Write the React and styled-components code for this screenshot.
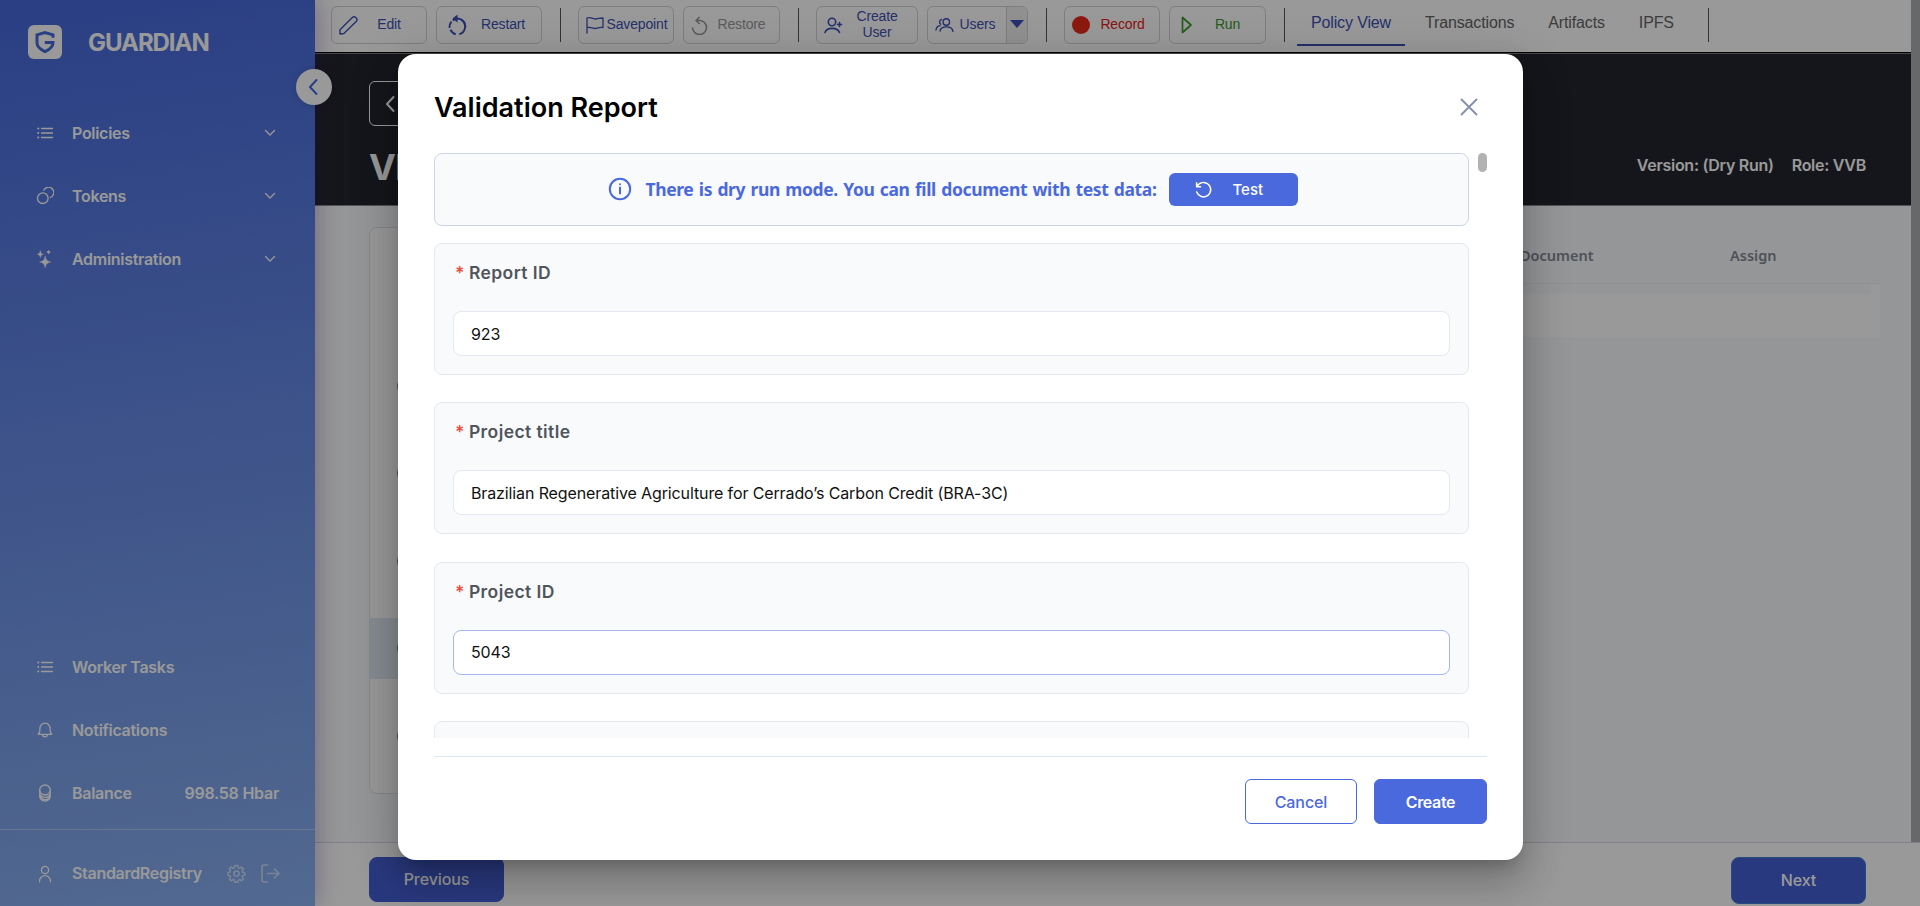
import React from "react";
import styled, { createGlobalStyle } from "styled-components";

const Global = createGlobalStyle`
  *, *::before, *::after { box-sizing: border-box; }
  html, body { margin: 0; padding: 0; height: 906px; overflow: hidden; }
  body { font-family: Inter, "Liberation Sans", sans-serif; background: #fff; }
  button, input { font-family: inherit; margin: 0; }
  svg { display: block; flex: none; }
`;

const Page = styled.div`
  position: relative;
  display: grid;
  grid-template-columns: 315px 1fr;
  width: 1920px;
  height: 906px;
  overflow: hidden;
`;

/* ---------- sidebar ---------- */

const Sidebar = styled.aside`
  position: relative;
  z-index: 2;
  display: flex;
  flex-direction: column;
  color: #fff;
  background: linear-gradient(172deg, #4769dc 0%, #89aff0 100%);
  box-shadow: 0 0 24px rgba(67, 20, 127, 0.35);
`;

const Brand = styled.div`
  display: flex;
  align-items: center;
  gap: 26px;
  height: 34px;
  margin: 25px 0 42px 28px;
  font-size: 24px;
  font-weight: 700;
  letter-spacing: -1.05px;
`;

const Menu = styled.nav`
  display: flex;
  flex-direction: column;
`;

const MenuItem = styled.div`
  display: flex;
  align-items: center;
  height: 63px;
  padding: 0 36px 0 36px;
  font-size: 16px;
  font-weight: 600;
  letter-spacing: -0.3px;
`;

const MenuLabel = styled.span`
  flex: 1;
  margin-left: 18px;
`;

const MenuValue = styled.span`
  letter-spacing: -0.25px;
`;

const ChevronWrap = styled.span`
  margin-right: 3px;
`;

const Spacer = styled.div`
  flex: 1;
`;

const UserBar = styled.div`
  display: flex;
  align-items: center;
  height: 77px;
  margin-top: 5px;
  padding: 10px 35px 0 36px;
  border-top: 1px solid rgba(255, 255, 255, 0.35);
  font-size: 16px;
  font-weight: 600;
  letter-spacing: -0.3px;
`;

const UserActions = styled.div`
  display: flex;
  gap: 14px;
  opacity: 0.6;
`;

const Collapse = styled.button`
  position: absolute;
  left: 296px;
  top: 69px;
  display: flex;
  align-items: center;
  justify-content: center;
  width: 36px;
  height: 36px;
  padding: 0 2px 0 0;
  border: 0;
  border-radius: 50%;
  background: #fff;
  box-shadow: 0 0 8px rgba(0, 0, 0, 0.15);
`;

/* ---------- main area ---------- */

const Main = styled.main`
  display: grid;
  grid-template-rows: 842px 64px;
  min-width: 0;
`;

const Viewport = styled.div`
  display: grid;
  grid-template-rows: 54px 152px 636px;
  min-width: 0;
  border-right: 9px solid #abadaf;
  background: #f9fafc;
`;

const TopRow = styled.div`
  display: flex;
  align-items: flex-start;
  background: #fff;
  border-bottom: 1px solid #777;
  box-shadow: inset 0 -1px 0 #000;
  padding: 6px 0 0 16px;
  font-family: "Liberation Sans", Arial, sans-serif;
`;

const ToolButton = styled.button`
  display: flex;
  align-items: center;
  width: ${(p) => p.$w}px;
  height: 38px;
  margin-right: ${(p) => p.$gap ?? 9}px;
  padding: 0 0 0 ${(p) => p.$pad ?? 7}px;
  border: 1px solid #d3d3d3;
  border-radius: 6px;
  background: transparent;
  color: ${(p) => p.$color ?? "#3f51b5"};
  font-size: 14px;
  line-height: 16px;
  letter-spacing: -0.15px;
  overflow: hidden;
`;

const ToolText = styled.span`
  flex: 1;
  padding-right: ${(p) => p.$pr ?? 4}px;
  padding-bottom: 2px;
  text-align: center;
`;

const Caret = styled.span`
  display: flex;
  align-items: center;
  justify-content: center;
  width: 21px;
  height: 36px;
  padding-bottom: 2px;
  border-left: 1px solid #d3d3d3;
  background: #f0f0f0;
`;

const Divider = styled.span`
  width: 1px;
  height: 34px;
  margin: 2px 17px 0 ${(p) => p.$ml ?? 9}px;
  background: #555;
`;

const Tab = styled.span`
  height: 40px;
  margin-right: 6px;
  padding: 8px 14px 0;
  border-bottom: 2px solid ${(p) => (p.$active ? "#3f51b5" : "transparent")};
  color: ${(p) => (p.$active ? "#3f51b5" : "#666")};
  font-size: 16px;
  line-height: 18px;
  letter-spacing: -0.14px;
`;

const Tabs = styled.div`
  display: flex;
  margin-left: -5px;
`;

const Hero = styled.header`
  display: flex;
  flex-direction: column;
  padding: 27px 45px 0 54px;
  color: #fff;
  background: #23252d;
  border-bottom: 1px solid #8b8d92;
`;

const BackButton = styled.button`
  display: flex;
  align-items: center;
  width: 110px;
  height: 45px;
  padding: 0 0 0 14px;
  border: 1px solid #fff;
  border-radius: 6px;
  background: transparent;
`;

const HeroRow = styled.div`
  display: flex;
  align-items: center;
  justify-content: space-between;
  height: 44px;
  margin-top: 19px;
`;

const HeroTitle = styled.h1`
  margin: 0;
  font-size: 36px;
  font-weight: 700;
  letter-spacing: -0.8px;
`;

const HeroMeta = styled.div`
  display: flex;
  gap: 18px;
  padding-bottom: 4px;
  font-size: 16px;
  font-weight: 600;
  letter-spacing: -0.28px;
`;

const Body = styled.section`
  display: flex;
  padding-left: 54px;
`;

const Steps = styled.div`
  display: flex;
  flex-direction: column;
  width: 300px;
  height: 567px;
  margin-top: 21px;
  border: 1px solid #e1e3e9;
  border-radius: 8px;
  background: #fff;
`;

const StepsHead = styled.div`
  height: 133px;
`;

const Step = styled.div`
  display: flex;
  align-items: center;
  height: 63px;
  margin-bottom: 27px;
  padding-left: 27px;
  background: ${(p) => (p.$active ? "#dfe9f3" : "transparent")};
`;

const StepDot = styled.span`
  width: 20px;
  height: 20px;
  border-radius: 50%;
  background: #6e7078;
`;

const Grid = styled.div`
  flex: 1;
  display: flex;
  flex-direction: column;
  padding: 24px 31px 0 0;
`;

const GridHead = styled.div`
  display: flex;
  justify-content: flex-end;
  height: 53px;
  padding: 15px 103px 0 0;
  color: #848995;
  font-family: "Noto Sans", sans-serif;
  font-size: 14.5px;
  font-weight: 600;
  line-height: 20px;
`;

const HeadCell = styled.span`
  width: ${(p) => p.$w}px;
`;

const GridRow = styled.div`
  height: 54px;
  background: #fff;
  border-top: 1px solid #eef0f4;
`;

const GridRowShade = styled.div`
  height: 10px;
  margin-right: 9px;
  background: #f9fafc;
`;

const BottomBar = styled.footer`
  display: flex;
  justify-content: space-between;
  padding: 14px 54px 0;
  background: #fff;
  border-top: 1px solid #d5d8e2;
`;

const NavButton = styled.button`
  width: 135px;
  height: ${(p) => p.$h}px;
  padding: 0 0 2px;
  border: 1px solid ${(p) => (p.$edge ? "#3f7fd0" : "#4560d6")};
  border-radius: 8px;
  background: #455fd4;
  color: #fff;
  font-size: 16px;
  font-weight: 500;
  letter-spacing: -0.1px;
`;

/* ---------- dialog ---------- */

const Overlay = styled.div`
  position: absolute;
  inset: 0;
  z-index: 10;
  display: flex;
  justify-content: center;
  align-items: flex-start;
  padding: 54px 0 0 1px;
  background: rgba(0, 0, 0, 0.4);
`;

const Dialog = styled.section`
  display: flex;
  flex-direction: column;
  width: 1125px;
  height: 806px;
  padding: 0 36px;
  border-radius: 18px;
  background: #fff;
  box-shadow: 0 11px 15px -7px rgba(0, 0, 0, 0.2), 0 24px 38px 3px rgba(0, 0, 0, 0.14),
    0 9px 46px 8px rgba(0, 0, 0, 0.12);
`;

const DialogHead = styled.div`
  display: flex;
  align-items: center;
  justify-content: space-between;
  height: 99px;
  padding: 7px 9px 0 0;
`;

const DialogTitle = styled.h2`
  margin: 0;
  color: #000;
  font-size: 27px;
  font-weight: 600;
  letter-spacing: 0;
`;

const ScrollArea = styled.div`
  display: flex;
  gap: 9px;
  height: 585px;
  overflow: hidden;
`;

const Form = styled.div`
  width: 1035px;
  flex: none;
`;

const Thumb = styled.div`
  width: 9px;
  height: 19px;
  border-radius: 5px;
  background: #b2b2b2;
`;

const Notice = styled.div`
  display: flex;
  align-items: center;
  justify-content: center;
  height: 73px;
  margin-bottom: 17.2px;
  padding: 0 0 2px 2px;
  border: 1px solid #cbd5e4;
  border-radius: 8px;
  background: #f9fafc;
  color: #4a69dc;
  font-family: "Noto Sans", "Open Sans", sans-serif;
  font-size: 17.5px;
  font-weight: 700;
`;

const NoticeText = styled.span`
  width: 506px;
  margin: 0 17px 0 14px;
  white-space: nowrap;
  letter-spacing: -0.38px;
  word-spacing: 1.2px;
`;

const TestButton = styled.button`
  display: flex;
  align-items: center;
  gap: 20px;
  width: 129px;
  height: 33px;
  margin-top: 2px;
  padding: 0 0 0 26px;
  border: 0;
  border-radius: 6px;
  background: #4a69dc;
  color: #fff;
  font-family: Inter, sans-serif;
  font-size: 15px;
  font-weight: 500;
`;

const Field = styled.div`
  height: 132px;
  margin-bottom: 27.2px;
  padding: 17px 18px 0;
  border: 1px solid #e4e9f0;
  border-radius: 8px;
  background: #f9fafc;
`;

const Label = styled.label`
  display: flex;
  gap: 4px;
  height: 24px;
  margin: 0 0 26px 2px;
  color: #50555d;
  font-size: 17.5px;
  font-weight: 600;
  line-height: 24px;
  letter-spacing: 0.42px;
  white-space: nowrap;
`;

const Required = styled.span`
  color: #e8503f;
`;

const Input = styled.input`
  display: block;
  width: 997px;
  height: 45px;
  padding: 0 17px;
  border: 1px solid ${(p) => (p.$focus ? "#a6b6ee" : "#e4e8f0")};
  border-radius: 8px;
  outline: 0;
  background: #fff;
  color: #111;
  font-size: 16px;
  letter-spacing: -0.12px;
`;

const DialogFoot = styled.div`
  display: flex;
  justify-content: flex-end;
  gap: 17px;
  margin-top: 18px;
  padding-top: 22px;
  border-top: 1px solid #e1e7ef;
`;

const Action = styled.button`
  width: ${(p) => p.$w}px;
  height: 45px;
  border: 1px solid #4a69dc;
  border-radius: 6px;
  background: ${(p) => (p.$primary ? "#4a69dc" : "#fff")};
  color: ${(p) => (p.$primary ? "#fff" : "#4a69dc")};
  font-size: 16px;
  font-weight: ${(p) => (p.$primary ? 600 : 500)};
  letter-spacing: ${(p) => (p.$primary ? "-0.35px" : "-0.1px")};
`;

/* ---------- icons ---------- */

const Svg = ({ w = 18, h = w, box, sw = 1.3, children, ...rest }) => (
  <svg width={w} height={h} viewBox={box ?? `0 0 ${w} ${h}`} fill="none" stroke="currentColor"
    strokeWidth={sw} strokeLinecap="round" strokeLinejoin="round" {...rest}>{children}</svg>
);

const LogoIcon = () => (
  <Svg w={34} strokeLinecap="butt" strokeLinejoin="miter" sw={3}>
    <rect width="34" height="34" rx="6" fill="#fff" stroke="none" />
    <path d="M25 12.800V9.800L17 7.500 9 9.800v8c0 4.500 3.600 6.800 8 8.900 4.400-2.100 8-4.400 8-9.200H16.800" stroke="#4769dc" />
  </Svg>
);
const ListIcon = () => (
  <Svg w={18} sw={1.3}>
    <path d="M5.500 4.500h11M5.500 9h11M5.500 13.500h11" />
    <path d="M2.200 4.500h.1M2.200 9h.1M2.200 13.500h.1" strokeWidth="2" />
  </Svg>
);
const TokensIcon = () => (
  <Svg w={18}>
    <circle cx="6.800" cy="11.200" r="5.300" />
    <path d="M7.700 3.200a5.300 5.300 0 1 1 6.500 7.300" />
  </Svg>
);
const SparkIcon = () => (
  <Svg w={18} stroke="none" fill="currentColor">
    <path d="M9.200 6.200c.8 4 1.700 4.900 5.500 5.800-3.800.9-4.700 1.800-5.500 5.800-.8-4-1.700-4.900-5.500-5.800 3.800-.9 4.700-1.800 5.500-5.800zM4.300 1c.4 2.100 1 2.700 3 3.200-2 .5-2.600 1.100-3 3.200-.4-2.100-1-2.700-3-3.200 2-.5 2.600-1.100 3-3.200zM12.600 0c.3 1.400.7 1.800 2.100 2.100-1.400.3-1.800.7-2.100 2.100-.3-1.400-.7-1.800-2.100-2.100 1.400-.3 1.800-.7 2.100-2.100z" stroke="currentColor" strokeWidth=".5" />
  </Svg>
);
const BellIcon = () => (
  <Svg w={18}>
    <path d="M2.200 13.300h13.600c-1.300-1.200-1.700-2.300-1.700-4.200V7.300a5.100 5.100 0 0 0-10.200 0v1.800c0 1.900-.4 3-1.700 4.200zM6.600 13.500a2.400 2.400 0 0 0 4.800 0" />
  </Svg>
);
const CoinsIcon = () => (
  <Svg w={18}>
    <ellipse cx="9" cy="6" rx="5.300" ry="5" />
    <path d="M3.700 6.500v5.800c0 2.900 2.300 4.800 5.300 4.800s5.300-1.900 5.300-4.800V6.500M3.700 9.300c.5 2.500 2.600 4 5.300 4s4.800-1.500 5.300-4M4 12.500c.8 2.100 2.600 3.200 5 3.200s4.200-1.100 5-3.200" />
  </Svg>
);
const UserIcon = () => (
  <Svg w={18} h={19}>
    <circle cx="9" cy="6" r="3.600" />
    <path d="M3.500 17.800v-.6a5.500 5.500 0 0 1 11 0v.6" />
  </Svg>
);
const GearIcon = () => (
  <Svg w={19} box="0 0 24 24" sw={1.900}>
    <circle cx="12" cy="12" r="3.300" />
    <path d="m10 1.800-.7 2.900-1.700.7-2.500-1.600-2.200 2.200 1.600 2.600-.7 1.700-2.500.6v3.200l2.500.6.700 1.700-1.600 2.600 2.200 2.200 2.500-1.600 1.700.7.700 2.900h3.600l.7-2.900 1.700-.7 2.500 1.600 2.200-2.200-1.600-2.600.7-1.700 2.500-.6v-3.200l-2.500-.6-.7-1.700 1.600-2.600-2.200-2.200-2.500 1.600-1.700-.7-.7-2.900z" />
  </Svg>
);
const ExitIcon = () => (
  <Svg w={20} h={19} sw={1.600}>
    <path d="M7.500 1H4a2 2 0 0 0-2 2v13a2 2 0 0 0 2 2h3.500M7.500 9.500H19M14.500 5l4.500 4.500-4.500 4.500" />
  </Svg>
);
const ChevronDown = () => <Svg w={12} h={8}><path d="m1.500 1.500 4.500 4.500 4.500-4.500" /></Svg>;
const ChevronLeft = ({ color = "#4169e2" }) => (
  <Svg w={12} h={18} sw={2} stroke={color}><path d="M9.500 2 3 9l6.500 7" /></Svg>
);
const PencilIcon = () => (
  <Svg w={19} sw={1.400}>
    <path d="M1 18v-4.200L13.300 1.600a2.500 2.500 0 0 1 3.500 0l.4.4a2.500 2.500 0 0 1 0 3.500L4.900 17.500z" />
  </Svg>
);
const RestartIcon = () => (
  <Svg w={19} h={22} sw={2} strokeLinecap="butt">
    <path d="M11.300 20.300a8 8 0 0 0 2-14.500M7.700 20.300a8 8 0 0 1-5.200-4.600M1.500 13.800a8 8 0 0 1 2-6.100M4.700 6.500a8 8 0 0 1 5.300-2" />
    <path d="M9.500 0.500v8L4.500 4.500z" fill="currentColor" stroke="none" />
    <path d="M9 4.500a8.200 8.200 0 0 1 8.500 8.500" />
  </Svg>
);
const FlagIcon = () => (
  <Svg w={18} h={18} sw={1.300}>
    <path d="M1 17V2M1 2c4-1.700 6 1.300 9 1 2.500-.2 4.500-1.200 7-1v9.500c-4-.8-5 1-8 1-2.500 0-4.500-2-8-.8" />
  </Svg>
);
const RestoreIcon = () => (
  <Svg w={17} h={19} sw={1.600} strokeLinecap="butt">
    <path d="M1.500 11.500a7 7 0 1 0 7-7H5.500M8.700 1 5 4.500 8.700 8" />
  </Svg>
);
const AddUserIcon = () => (
  <Svg w={19} h={17} sw={1.600}>
    <circle cx="8" cy="5" r="3.700" />
    <path d="M1 15.500c1.500-5.500 12.500-5.500 14.500 0M15.500 5.500v4M13.500 7.500h4" />
  </Svg>
);
const UsersIcon = () => (
  <Svg w={19} h={16} sw={1.400}>
    <circle cx="11.300" cy="5" r="3.200" />
    <path d="M5 14c1-5.500 12-5.500 13 .3M6.500 2.500a2.700 2.700 0 0 0-.8 4.800M1 13c.3-2.500 1.700-4 4-4.400" />
  </Svg>
);
const PlayIcon = () => (
  <Svg w={12} h={20} sw={1.700}><path d="M1.500 2.500v15L10 10z" /></Svg>
);
const InfoIcon = () => (
  <Svg w={24} sw={2}>
    <circle cx="12" cy="12" r="10.200" />
    <path d="M12 10.500v6M12 7.200v.1" />
  </Svg>
);
const UndoIcon = () => (
  <Svg w={18} sw={1.500}>
    <path d="M1.600 1.800v4h4M2 5.600A7.200 7.200 0 1 1 1.700 11" />
  </Svg>
);
const CloseIcon = () => (
  <Svg w={18} sw={1.900} stroke="#8690ac"><path d="m1.500 1.500 15 15M16.500 1.500l-15 15" /></Svg>
);

/* ---------- screen ---------- */

const mainMenu = [
  ["Policies", ListIcon],
  ["Tokens", TokensIcon],
  ["Administration", SparkIcon],
];

const fields = [
  ["Report ID", "923"],
  ["Project title", "Brazilian Regenerative Agriculture for Cerrado’s Carbon Credit (BRA-3C)"],
  ["Project ID", "5043", true],
];

const steps = [false, false, false, true, false];

function SideNav() {
  return (
    <Sidebar>
      <Brand><LogoIcon />GUARDIAN</Brand>
      <Menu>
        {mainMenu.map(([name, Icon]) => (
          <MenuItem key={name}>
            <Icon /><MenuLabel>{name}</MenuLabel><ChevronWrap><ChevronDown /></ChevronWrap>
          </MenuItem>
        ))}
      </Menu>
      <Spacer />
      <Menu>
        <MenuItem><ListIcon /><MenuLabel>Worker Tasks</MenuLabel></MenuItem>
        <MenuItem><BellIcon /><MenuLabel>Notifications</MenuLabel></MenuItem>
        <MenuItem><CoinsIcon /><MenuLabel>Balance</MenuLabel><MenuValue>998.58 Hbar</MenuValue></MenuItem>
      </Menu>
      <UserBar>
        <UserIcon /><MenuLabel>StandardRegistry</MenuLabel>
        <UserActions><GearIcon /><ExitIcon /></UserActions>
      </UserBar>
      <Collapse><ChevronLeft /></Collapse>
    </Sidebar>
  );
}

function Toolbar() {
  return (
    <TopRow>
      <ToolButton $w={96}><PencilIcon /><ToolText $pr={6}>Edit</ToolText></ToolButton>
      <ToolButton $w={106} $pad={11}><RestartIcon /><ToolText $pr={2}>Restart</ToolText></ToolButton>
      <Divider />
      <ToolButton $w={96}><FlagIcon /><ToolText $pr={3}>Savepoint</ToolText></ToolButton>
      <ToolButton $w={97} $color="#999"><RestoreIcon /><ToolText $pr={4}>Restore</ToolText></ToolButton>
      <Divider />
      <ToolButton $w={102}><AddUserIcon /><ToolText $pr={6}>Create<br />User</ToolText></ToolButton>
      <ToolButton $w={101}><UsersIcon /><ToolText $pr={5}>Users</ToolText>
        <Caret><Svg w={14} h={8} stroke="none" fill="#3f51b5"><path d="M0 0h14L7 8z" /></Svg></Caret>
      </ToolButton>
      <Divider />
      <ToolButton $w={96} $color="#ea2216"><Svg w={18} stroke="none" fill="#ea2a1c"><circle cx="9" cy="9" r="9" /></Svg><ToolText $pr={4}>Record</ToolText></ToolButton>
      <ToolButton $w={97} $pad={11} $color="#3a9a2c"><PlayIcon /><ToolText $pr={3}>Run</ToolText></ToolButton>
      <Divider />
      <Tabs>
        <Tab $active>Policy View</Tab>
        <Tab>Transactions</Tab>
        <Tab>Artifacts</Tab>
        <Tab>IPFS</Tab>
      </Tabs>
      <Divider $ml={14} />
    </TopRow>
  );
}

function ReportDialog() {
  return (
    <Overlay>
      <Dialog>
        <DialogHead><DialogTitle>Validation Report</DialogTitle><CloseIcon /></DialogHead>
        <ScrollArea>
          <Form>
            <Notice>
              <InfoIcon />
              <NoticeText>There is dry run mode. You can fill document with test data:</NoticeText>
              <TestButton><UndoIcon />Test</TestButton>
            </Notice>
            {fields.map(([name, value, focus]) => (
              <Field key={name}>
                <Label><Required>*</Required>{name}</Label>
                <Input $focus={focus} defaultValue={value} />
              </Field>
            ))}
            <Field />
          </Form>
          <Thumb />
        </ScrollArea>
        <DialogFoot>
          <Action $w={112}>Cancel</Action>
          <Action $w={113} $primary>Create</Action>
        </DialogFoot>
      </Dialog>
    </Overlay>
  );
}

export default function App() {
  return (
    <Page>
      <Global />
      <SideNav />
      <Main>
        <Viewport>
          <Toolbar />
          <Hero>
            <BackButton><ChevronLeft color="#fff" /></BackButton>
            <HeroRow>
              <HeroTitle>VM</HeroTitle>
              <HeroMeta><span>Version: (Dry Run)</span><span>Role: VVB</span></HeroMeta>
            </HeroRow>
          </Hero>
          <Body>
            <Steps>
              <StepsHead />
              {steps.map((active, i) => <Step key={i} $active={active}><StepDot /></Step>)}
            </Steps>
            <Grid>
              <GridHead><HeadCell $w={210}>Document</HeadCell><HeadCell $w={47}>Assign</HeadCell></GridHead>
              <GridRow><GridRowShade /></GridRow>
            </Grid>
          </Body>
        </Viewport>
        <BottomBar>
          <NavButton $h={45}>Previous</NavButton>
          <NavButton $h={47} $edge>Next</NavButton>
        </BottomBar>
      </Main>
      <ReportDialog />
    </Page>
  );
}
